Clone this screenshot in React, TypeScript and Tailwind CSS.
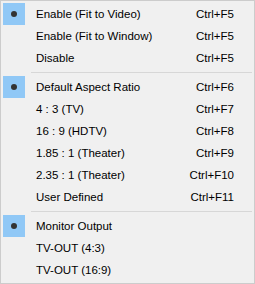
import React from "react"

type Item = { label: string; shortcut?: string; checked?: boolean } | "sep"

const items: Item[] = [
	{ label: "Enable (Fit to Video)", shortcut: "Ctrl+F5", checked: true },
	{ label: "Enable (Fit to Window)", shortcut: "Ctrl+F5" },
	{ label: "Disable", shortcut: "Ctrl+F5" },
	"sep",
	{ label: "Default Aspect Ratio", shortcut: "Ctrl+F6", checked: true },
	{ label: "4 : 3 (TV)", shortcut: "Ctrl+F7" },
	{ label: "16 : 9 (HDTV)", shortcut: "Ctrl+F8" },
	{ label: "1.85 : 1 (Theater)", shortcut: "Ctrl+F9" },
	{ label: "2.35 : 1 (Theater)", shortcut: "Ctrl+F10" },
	{ label: "User Defined", shortcut: "Ctrl+F11" },
	"sep",
	{ label: "Monitor Output", checked: true },
	{ label: "TV-OUT (4:3)" },
	{ label: "TV-OUT (16:9)" },
]

function MenuRow({ label, shortcut, checked }: { label: string; shortcut?: string; checked?: boolean }) {
	return (
		<div className="flex items-center h-[22px]">
			<div className={`w-[22px] h-[22px] flex items-center justify-center shrink-0 ${checked ? "bg-[#90c8f6]" : ""}`}>
				{checked && <div className="w-[6px] h-[6px] rounded-full bg-[#333333]" />}
			</div>
			<span className="ml-[11px] flex-1 leading-[22px]">{label}</span>
			{shortcut && <span className="mr-[18px] leading-[22px]">{shortcut}</span>}
		</div>
	)
}

export default function App() {
	return (
		<div className="w-[255px] h-[284px] bg-[#f0f0f0] border border-[#cccccc] p-[2px] text-[11.5px] text-black font-['Segoe_UI','Liberation_Sans',sans-serif]">
			{items.map((item, i) =>
				item === "sep" ? (
					<div key={i} className="h-[7px] pt-[3px] pl-[28px]">
						<div className="h-px bg-[#d7d7d7]" />
					</div>
				) : (
					<MenuRow key={i} {...item} />
				)
			)}
		</div>
	)
}
